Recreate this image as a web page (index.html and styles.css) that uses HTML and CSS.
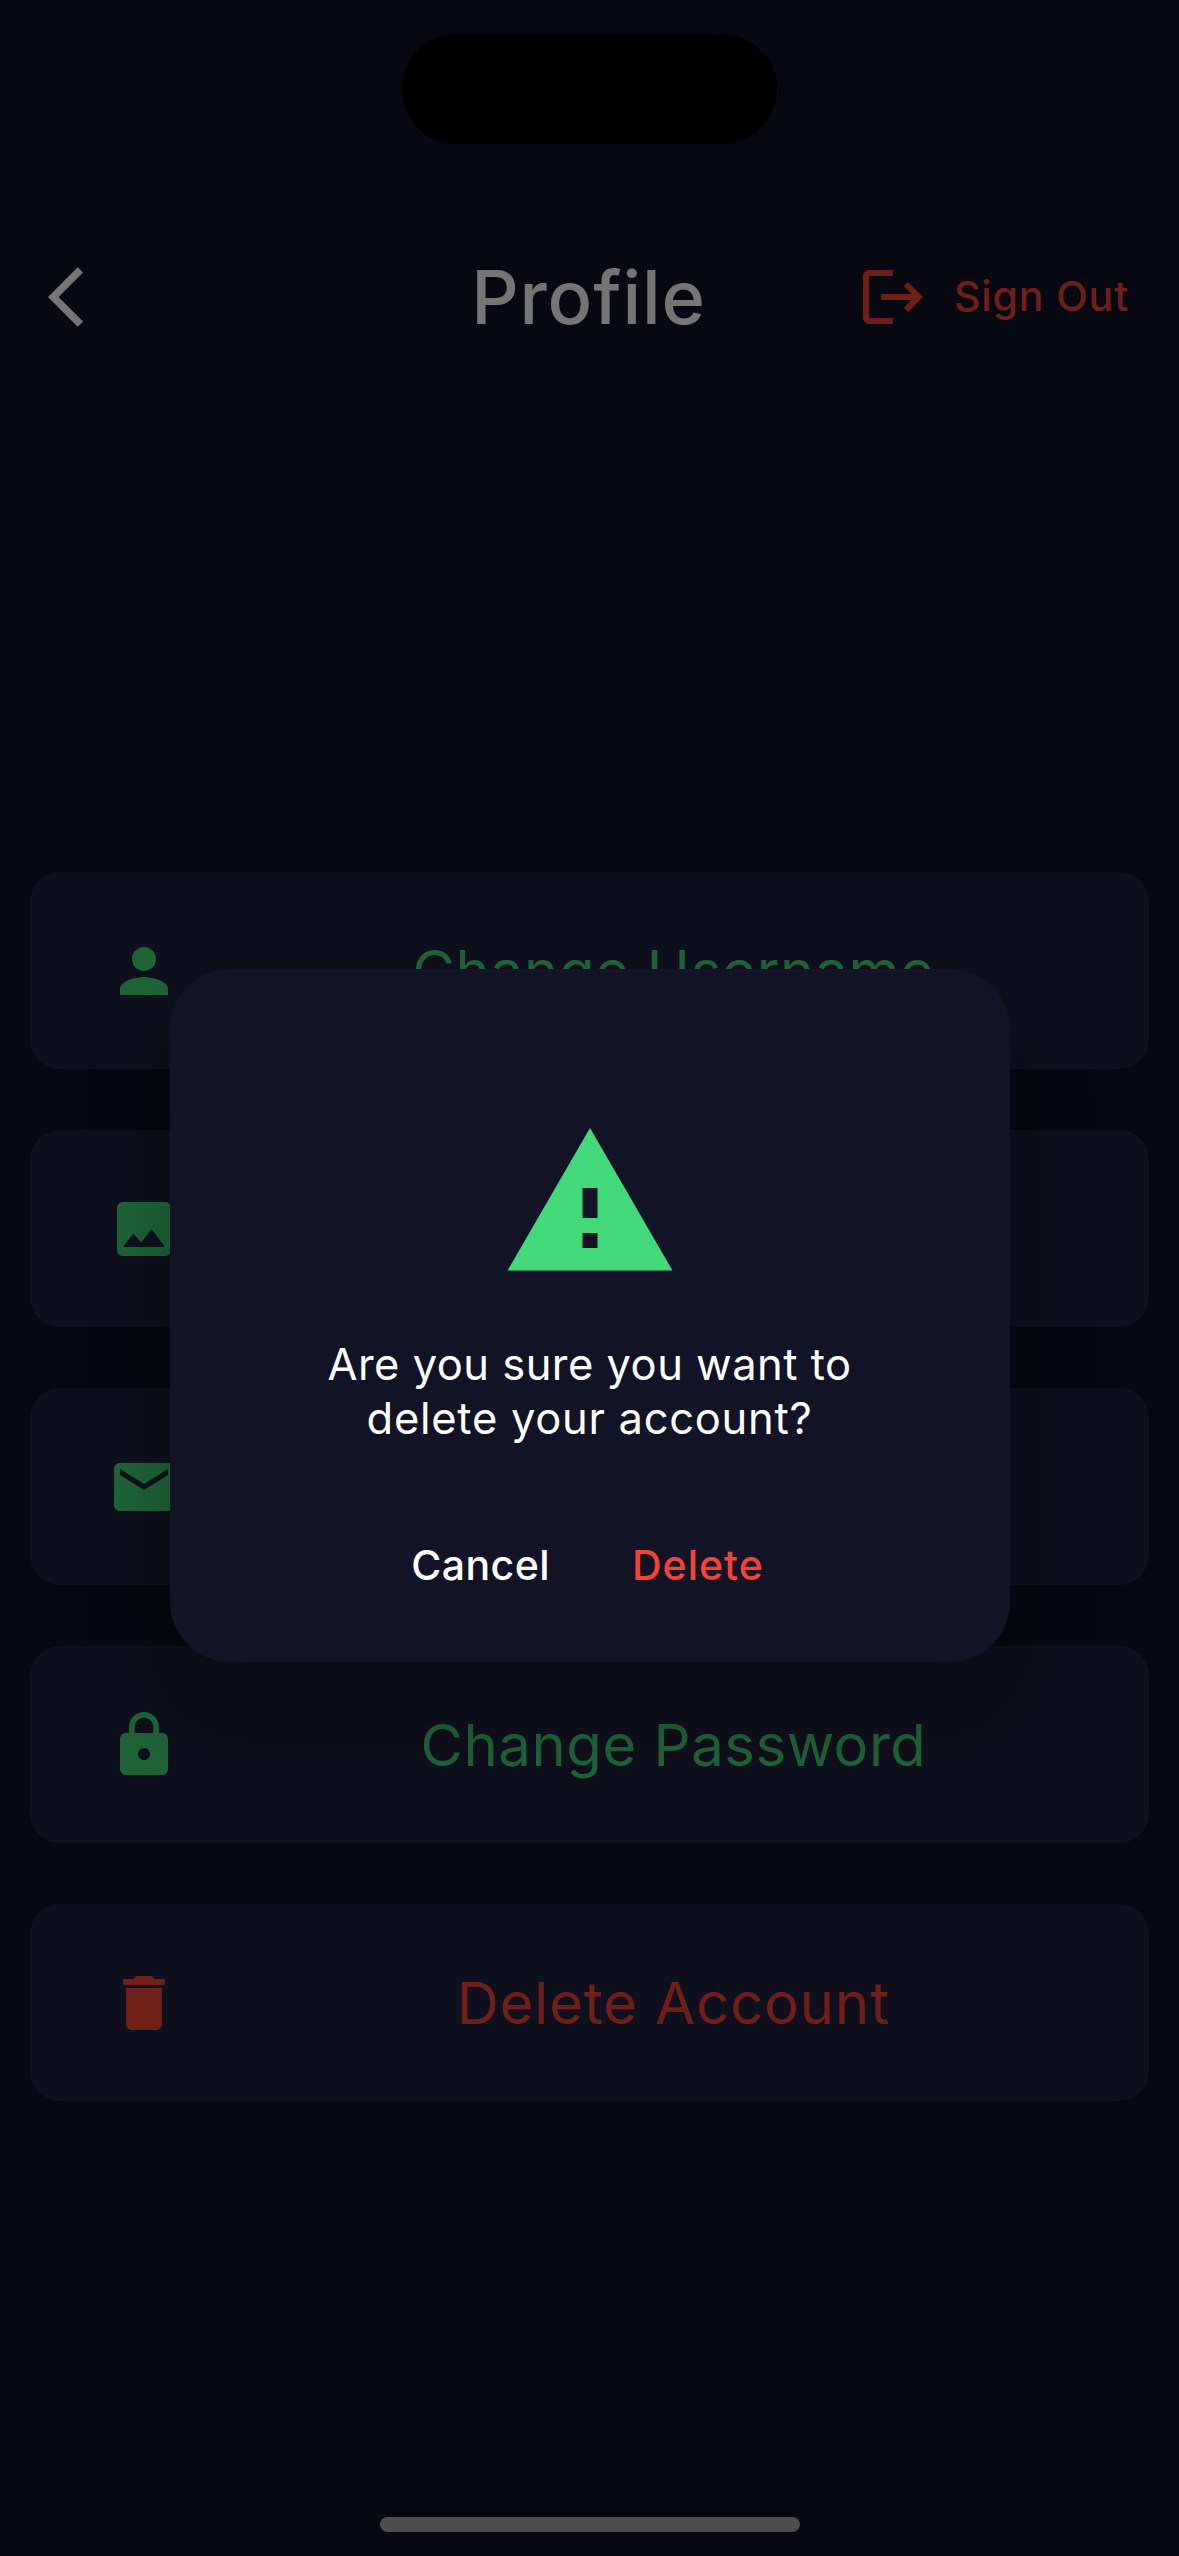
FILE: index.html
```html
<!DOCTYPE html>
<html lang="en">
<head>
<meta charset="utf-8">
<title>Profile</title>
<link rel="stylesheet" href="styles.css">
</head>
<body>
<div class="screen">
  <header class="header">
    <svg class="icon back" viewBox="0 0 24 24"><path d="M11.67 3.87L9.9 2.1 0 12l9.9 9.9 1.77-1.77L3.54 12z"/></svg>
    <h1 class="title">Profile</h1>
    <div class="sign-out">
      <svg class="icon" viewBox="0 0 24 24"><path d="M17 7l-1.41 1.41L18.17 11H8v2h10.17l-2.58 2.58L17 17l5-5zM4 5h8V3H4c-1.1 0-2 .9-2 2v14c0 1.1.9 2 2 2h8v-2H4V5z"/></svg>
      <span class="sign-out-text">Sign Out</span>
    </div>
  </header>

  <main class="list">
    <div class="card">
      <svg class="icon" viewBox="0 0 24 24"><path d="M12 12c2.21 0 4-1.79 4-4s-1.79-4-4-4-4 1.79-4 4 1.79 4 4 4zm0 2c-2.67 0-8 1.34-8 4v2h16v-2c0-2.66-5.33-4-8-4z"/></svg>
      <span class="label">Change Username</span>
    </div>
    <div class="card">
      <svg class="icon" viewBox="0 0 24 24"><path d="M21 19V5c0-1.1-.9-2-2-2H5c-1.1 0-2 .9-2 2v14c0 1.1.9 2 2 2h14c1.1 0 2-.9 2-2zM8.5 13.5l2.5 3.01L14.5 12l4.5 6H5l3.5-4.5z"/></svg>
    </div>
    <div class="card">
      <svg class="icon" viewBox="0 0 24 24"><path d="M20 4H4c-1.1 0-1.99.9-1.99 2L2 18c0 1.1.9 2 2 2h16c1.1 0 2-.9 2-2V6c0-1.1-.9-2-2-2zm0 4l-8 5-8-5V6l8 5 8-5v2z"/></svg>
    </div>
    <div class="card">
      <svg class="icon" viewBox="0 0 24 24"><path d="M18 8h-1V6c0-2.76-2.24-5-5-5S7 3.24 7 6v2H6c-1.1 0-2 .9-2 2v10c0 1.1.9 2 2 2h12c1.1 0 2-.9 2-2V10c0-1.1-.9-2-2-2zm-6 9c-1.1 0-2-.9-2-2s.9-2 2-2 2 .9 2 2-.9 2-2 2zm3.1-9H8.9V6c0-1.71 1.39-3.1 3.1-3.1 1.71 0 3.1 1.39 3.1 3.1v2z"/></svg>
      <span class="label label-password">Change Password</span>
    </div>
    <div class="card danger">
      <svg class="icon" viewBox="0 0 24 24"><path d="M6 19c0 1.1.9 2 2 2h8c1.1 0 2-.9 2-2V7H6v12zM19 4h-3.5l-1-1h-5l-1 1H5v2h14V4z"/></svg>
      <span class="label label-delete">Delete Account</span>
    </div>
  </main>
</div>

<div class="scrim">
  <section class="dialog" role="alertdialog">
    <svg class="warning" viewBox="0 0 24 24"><path d="M1 21h22L12 2 1 21zm12-3h-2v-2h2v2zm0-4h-2v-4h2v4z"/></svg>
    <p class="message">Are you sure you want to<br><span class="line-two">delete your account?</span></p>
    <div class="actions">
      <span class="cancel">Cancel</span>
      <span class="delete">Delete</span>
    </div>
  </section>
</div>

<div class="island"></div>
<div class="home-indicator"></div>
</body>
</html>
```
FILE: styles.css
```css
* { box-sizing: border-box; }

body {
  margin: 0;
  position: relative;
  width: 1179px;
  height: 2556px;
  overflow: hidden;
  background: #121229;
  font-family: Inter, "Liberation Sans", sans-serif;
}

.screen { padding-top: 261px; }

.icon {
  display: block;
  flex: none;
  width: 72px;
  height: 72px;
  fill: currentColor;
}

.header {
  display: grid;
  grid-template-columns: 1fr auto 1fr;
  align-items: center;
  height: 72px;
  padding: 0 50px 0 48px;
  color: #fff;
}

.title {
  margin: 0;
  font-size: 74px;
  line-height: 72px;
  font-weight: 450;
  letter-spacing: .9px;
}

.sign-out {
  display: flex;
  align-items: center;
  justify-content: flex-end;
  gap: 25px;
  color: #f44336;
  font-size: 41px;
  font-weight: 450;
  letter-spacing: .9px;
}

.sign-out-text {
  line-height: 70px;
  padding-bottom: 2px;
}

.list {
  display: flex;
  flex-direction: column;
  gap: 60.33px;
  margin-top: 538.67px;
  padding: 0 30px;
}

.card {
  display: flex;
  align-items: center;
  height: 197.67px;
  padding: 1.4px 0 0 78px;
  border-radius: 30px;
  background: #212341;
  color: #43d978;
}

.card .icon { margin-right: 18px; }

.card.danger { color: #f44336; }

.label {
  flex: 1;
  text-align: center;
  font-size: 58px;
  line-height: 72px;
  letter-spacing: .74px;
}

.label-password { letter-spacing: .55px; }
.label-delete { letter-spacing: .89px; }

.scrim {
  position: absolute;
  inset: 0;
  padding: 969px 169.5px 0;
  background: rgba(0, 0, 0, .54);
}

.dialog {
  display: flex;
  flex-direction: column;
  align-items: center;
  height: 692.67px;
  padding-top: 144.33px;
  border-radius: 60px;
  background: #131328;
  box-shadow: 0 54px 90px -8px rgba(0, 0, 0, .33);
  color: #fff;
}

.warning {
  width: 180px;
  height: 180px;
  flex: none;
  fill: #43d978;
}

.message {
  margin: 44px 0 0;
  text-align: center;
  font-size: 43.5px;
  line-height: 54px;
  letter-spacing: .48px;
}

.line-two { letter-spacing: .72px; }

.actions {
  display: flex;
  gap: 82px;
  margin-top: 48px;
  padding-right: 4px;
  font-size: 41px;
  line-height: 144px;
  font-weight: 500;
}

.cancel { letter-spacing: .45px; }

.delete {
  color: #f44336;
  letter-spacing: 1px;
}

.island {
  position: absolute;
  top: 34px;
  left: 402px;
  width: 375px;
  height: 110px;
  border-radius: 55px;
  background: #000;
}

.home-indicator {
  position: absolute;
  left: 380px;
  bottom: 24px;
  width: 420px;
  height: 15px;
  border-radius: 8px;
  background: #4d4d4d;
}
```
